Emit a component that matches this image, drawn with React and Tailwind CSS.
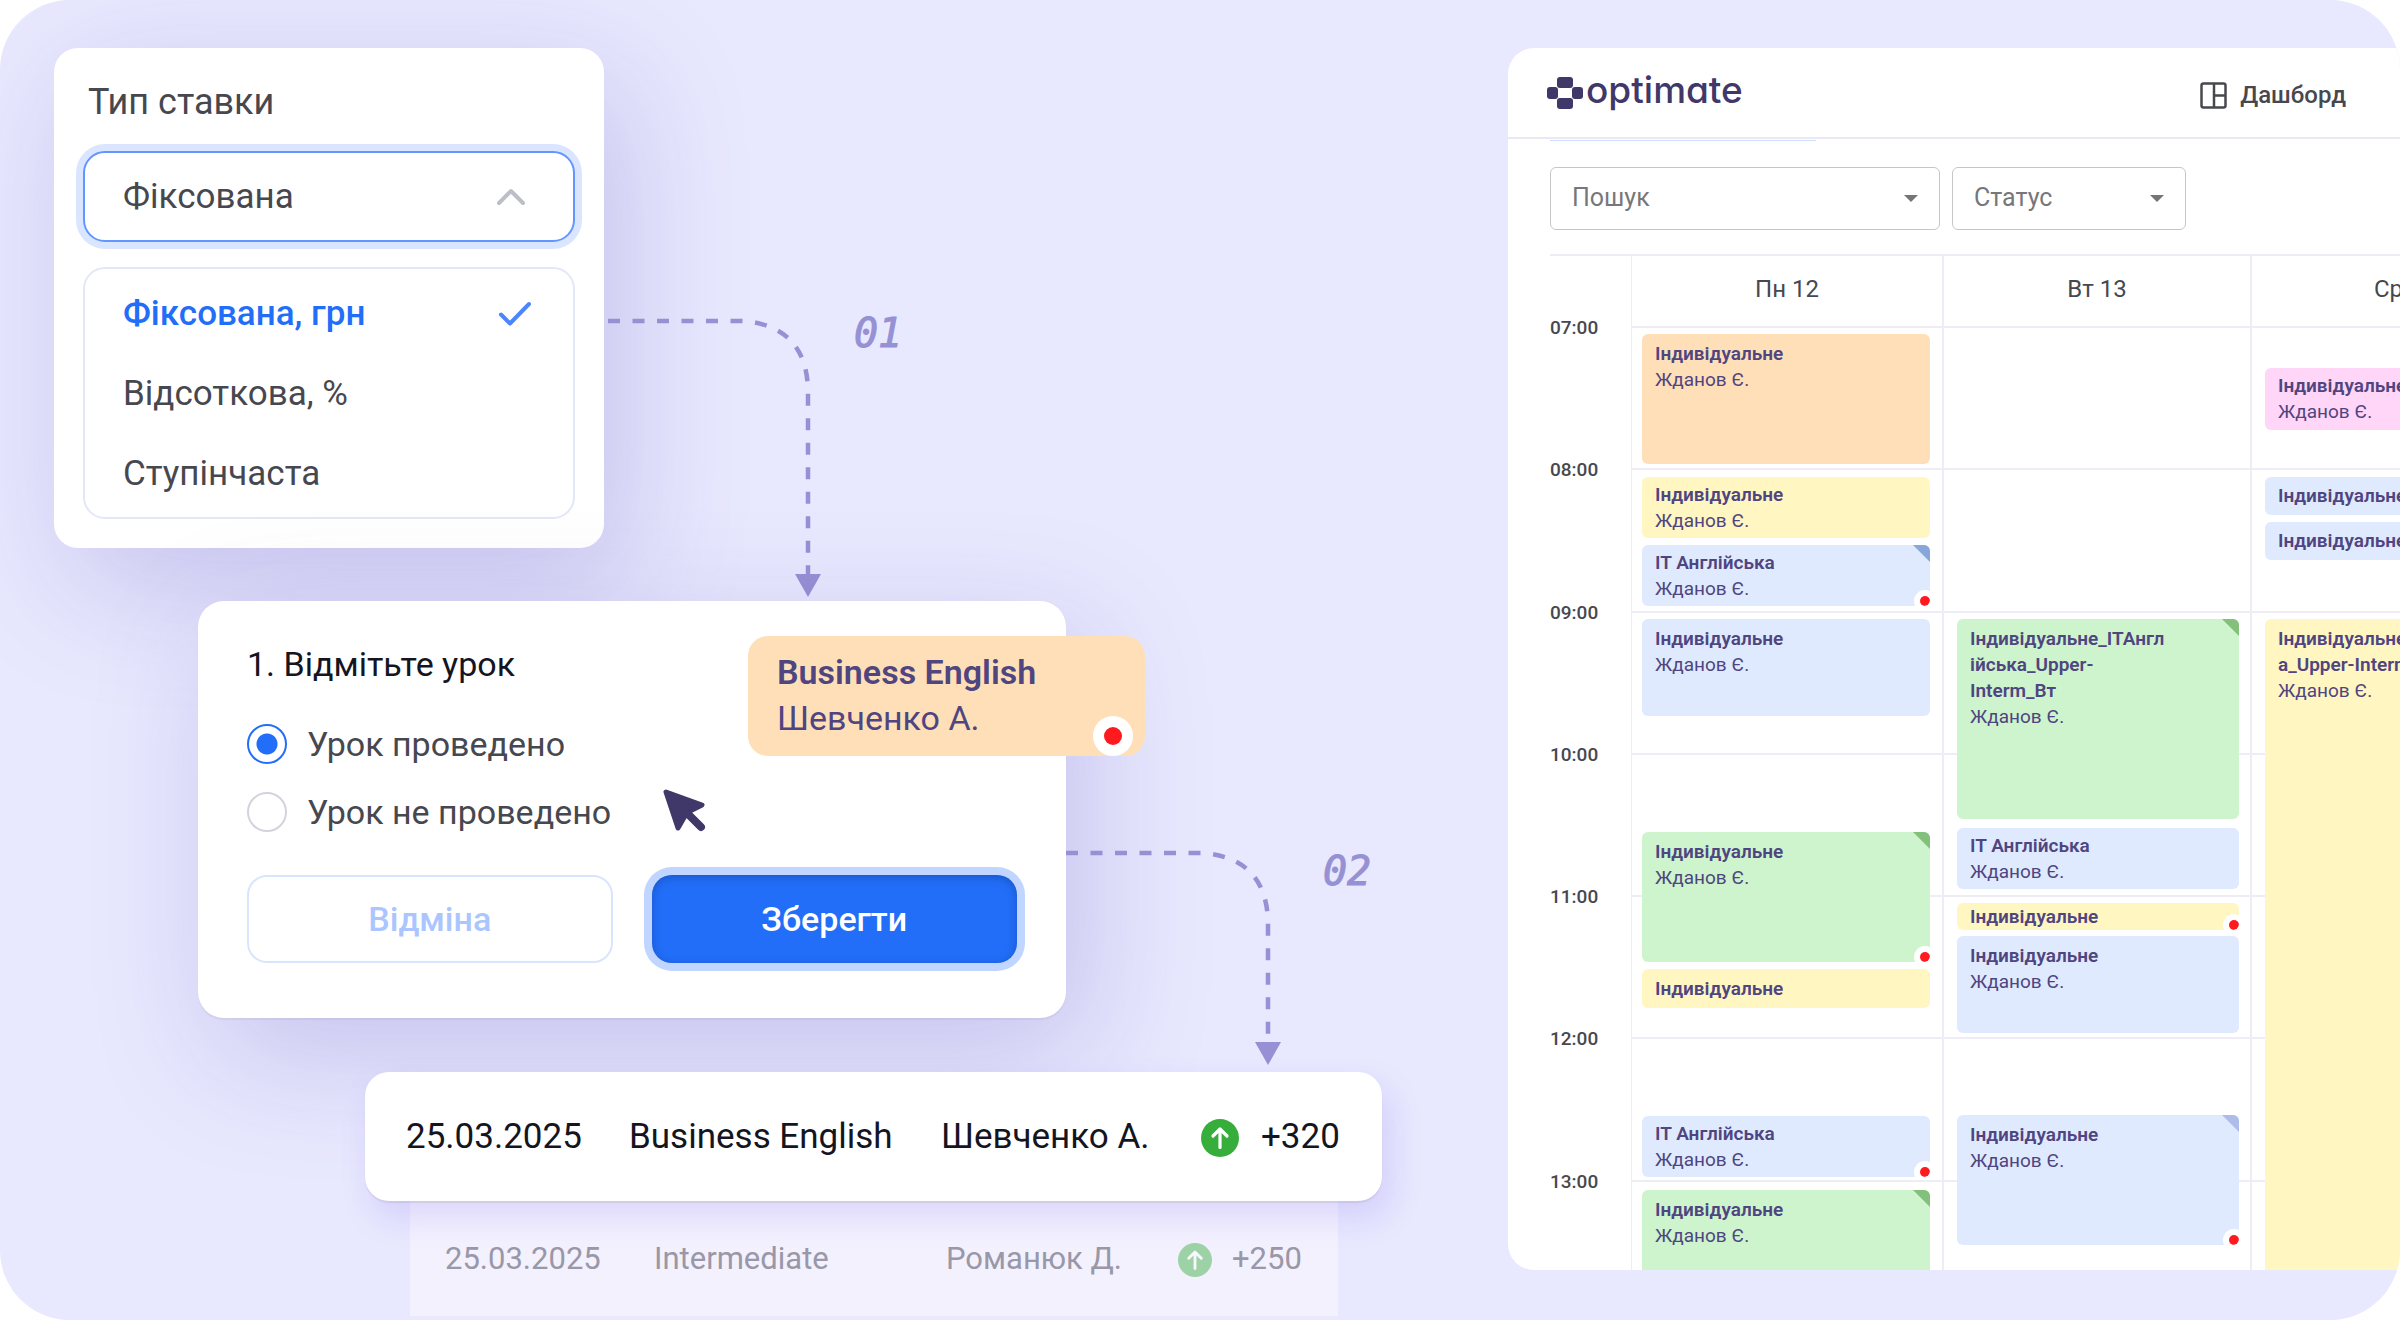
import React, { useState } from "react";

const TONES = {
  orange: "bg-[#ffdfb8]",
  yellow: "bg-[#fff6c2]",
  blue: "bg-[#dfeaff]",
  green: "bg-[#cdf4cc]",
  pink: "bg-[#ffd5f8]",
};

const CORNERS = {
  blue: "border-t-[#86a6dc]",
  green: "border-t-[#82c07c]",
  lilac: "border-t-[#adbce8]",
};

const MONDAY = [
  { title: "Індивідуальне", tone: "orange", box: "mt-2 h-[130px] pt-[7px]", teacher: true },
  { title: "Індивідуальне", tone: "yellow", box: "mt-[13px] h-[61px] pt-[5px]", teacher: true },
  { title: "ІТ Англійська", tone: "blue", box: "mt-[7px] h-[61px] pt-[5px]", teacher: true, corner: "blue", dot: true },
  { title: "Індивідуальне", tone: "blue", box: "mt-[13px] h-[97px] pt-[7px]", teacher: true },
  { title: "Індивідуальне", tone: "green", box: "mt-[116px] h-[130px] pt-[7px]", teacher: true, corner: "green", dot: true },
  { title: "Індивідуальне", tone: "yellow", box: "mt-[7px] h-[39px] pt-[7px]" },
  { title: "ІТ Англійська", tone: "blue", box: "mt-[108px] h-[61px] pt-[5px]", teacher: true, dot: true },
  { title: "Індивідуальне", tone: "green", box: "mt-[13px] h-[130px] pt-[7px]", teacher: true, corner: "green" },
];

const TUESDAY = [
  { title: "Індивідуальне_ІТАнгл ійська_Upper-Interm_Вт", tone: "green", box: "mt-[293px] h-[200px] pt-[7px] pr-[60px]", teacher: true, corner: "green" },
  { title: "ІТ Англійська", tone: "blue", box: "mt-[9px] h-[61px] pt-[5px]", teacher: true },
  { title: "Індивідуальне", tone: "yellow", box: "mt-[14px] h-[27px] pt-px", dot: true },
  { title: "Індивідуальне", tone: "blue", box: "mt-[6px] h-[97px] pt-[7px]", teacher: true },
  { title: "Індивідуальне", tone: "blue", box: "mt-[82px] h-[130px] pt-[7px]", teacher: true, corner: "lilac", dot: true },
];

const WEDNESDAY = [
  { title: "Індивідуальне", tone: "pink", box: "mt-[42px] h-[62px] pt-[5px]", teacher: true },
  { title: "Індивідуальне", tone: "blue", box: "mt-[47px] h-[38px] pt-[6px]" },
  { title: "Індивідуальне", tone: "blue", box: "mt-[7px] h-[38px] pt-[6px]" },
  { title: "Індивідуальне_ІТАнглійськ a_Upper-Interm_Ср", tone: "yellow", box: "mt-[59px] h-[660px] pt-[7px]", teacher: true },
];

const DAYS = [
  { name: "Пн 12", events: MONDAY, col: "w-[311px] border-l", inset: "pl-[10px] pr-[12px]" },
  { name: "Вт 13", events: TUESDAY, col: "w-[308px] border-l-2", inset: "pl-[13px] pr-[11px]" },
  { name: "Ср 14", events: WEDNESDAY, col: "w-[308px] border-l-2", inset: "pl-[13px] pr-[11px]" },
];

const HOURS = [
  { label: "07:00", h: "h-[142px]" },
  { label: "08:00", h: "h-[143px]" },
  { label: "09:00", h: "h-[142px]" },
  { label: "10:00", h: "h-[142px]" },
  { label: "11:00", h: "h-[142px]" },
  { label: "12:00", h: "h-[143px]" },
  { label: "13:00", h: "h-[90px]" },
];

function Lesson({ title, tone, box, teacher, corner, dot }) {
  return (
    <article className={`relative shrink-0 overflow-hidden rounded-md pl-[13px] text-[19px] leading-[26px] text-[#4f4580] ${TONES[tone]} ${box}`}>
      <h4 className="font-semibold">{title}</h4>
      {teacher && <p>Жданов Є.</p>}
      {corner && <span className={`absolute top-0 right-0 border-t-[17px] border-l-[17px] border-l-transparent ${CORNERS[corner]}`} />}
      {dot && (
        <span className="absolute -right-[6px] -bottom-[6px] flex size-[22px] items-center justify-center rounded-full bg-white">
          <span className="size-[10px] rounded-full bg-[#ff1a1f]" />
        </span>
      )}
    </article>
  );
}

function ArrowBadge({ className }) {
  return (
    <svg viewBox="0 0 38 38" className={className} aria-hidden="true">
      <circle cx="19" cy="19" r="19" fill="#37ad3c" />
      <path d="M19 28.500V10.500M12 17l7-7 7 7" fill="none" stroke="#fff" strokeWidth="3.200" strokeLinecap="round" strokeLinejoin="round" />
    </svg>
  );
}

function Connector({ className, d, tip }) {
  return (
    <svg className={className} width="220" height="290" viewBox="0 0 220 290" fill="none" aria-hidden="true">
      <path d={d} stroke="#9690d4" strokeWidth="4.500" strokeDasharray="12 12.500" />
      <path d={tip} fill="#9690d4" />
    </svg>
  );
}

function StepNumber({ className, children }) {
  return (
    <span className={`absolute font-['DejaVu_Sans_Mono',monospace] text-[40px] text-[#9690d4] italic [-webkit-text-stroke:1px_#9690d4] ${className}`}>
      {children}
    </span>
  );
}

function RateCard() {
  const [open, setOpen] = useState(true);
  const [rate, setRate] = useState(0);
  const options = ["Фіксована, грн", "Відсоткова, %", "Ступінчаста"];
  return (
    <section className="relative mt-12 ml-[54px] w-[550px] rounded-[24px] bg-white px-[29px] pt-[31px] pb-[29px] text-[35px] leading-[46px] text-[#47484f] shadow-[20px_36px_120px_rgba(100,90,190,0.26)]">
      <h2 id="rate-label" className="pl-[5px] text-[36px]">Тип ставки</h2>
      <button
        type="button"
        aria-labelledby="rate-label"
        aria-expanded={open}
        onClick={() => setOpen(!open)}
        className="mt-[26px] flex h-[91px] w-full items-center justify-between rounded-[22px] border-2 border-[#6297ff] bg-white pr-[46px] pl-[38px] ring-7 ring-[#dae6ff]"
      >
        <span>Фіксована</span>
        <svg width="32" height="20" viewBox="0 0 32 20" fill="none" aria-hidden="true">
          <path d="M4 16 16 4l12 12" stroke="#bcbfc7" strokeWidth="4" strokeLinecap="round" strokeLinejoin="round" />
        </svg>
      </button>
      <ul role="listbox" aria-labelledby="rate-label" className="mt-[25px] rounded-[22px] border-2 border-[#e3e7f8] pt-[5px] pb-[3px]">
        {options.map((o, i) => (
          <li key={o} role="option" aria-selected={rate === i}>
            <button
              type="button"
              onClick={() => setRate(i)}
              className={`flex h-20 w-full items-center justify-between pr-[40px] pl-[38px] ${rate === i ? "font-medium text-[#226ef8]" : ""}`}
            >
              {o}
              {rate === i && (
                <svg width="36" height="28" viewBox="0 0 36 28" fill="none" aria-hidden="true">
                  <path d="m4 14.500 9 9L32 4" stroke="#4c86ff" strokeWidth="4" strokeLinecap="round" strokeLinejoin="round" />
                </svg>
              )}
            </button>
          </li>
        ))}
      </ul>
      <Connector className="absolute top-[259px] left-[554px]" d="M0 14h136q64 6 64 72v190" tip="M187 267h26l-13 23z" />
      <StepNumber className="top-[262px] left-[800px]">01</StepNumber>
    </section>
  );
}

function RadioRow({ id, label, checked, onChange }) {
  return (
    <label htmlFor={id} className="flex h-10 items-center gap-5">
      <input
        id={id}
        type="radio"
        name="lesson"
        checked={checked}
        onChange={onChange}
        className="size-10 appearance-none rounded-full border-2 border-[#d5d2de] bg-white checked:border-[#226ef8] checked:bg-[radial-gradient(circle,#226ef8_0_10px,transparent_11px)]"
      />
      {label}
    </label>
  );
}

function LessonCard() {
  const [held, setHeld] = useState(true);
  return (
    <section className="relative mt-[53px] ml-[198px] w-[868px] rounded-[26px] bg-white px-[49px] pt-[40px] pb-[55px] text-[34px] leading-[46px] text-[#47484f] shadow-[0_2px_1px_rgba(160,140,170,0.15),20px_36px_120px_rgba(100,90,190,0.26)]">
      <h2 className="text-[#14151f]">1. Відмітьте урок</h2>
      <fieldset className="mt-[37px] flex flex-col gap-7">
        <RadioRow id="held" label="Урок проведено" checked={held} onChange={() => setHeld(true)} />
        <RadioRow id="not-held" label="Урок не проведено" checked={!held} onChange={() => setHeld(false)} />
      </fieldset>
      <div className="mt-[43px] grid grid-cols-2 gap-[39px] text-[34px] font-medium">
        <button type="button" className="h-[88px] rounded-[20px] border-2 border-[#d9e5ff] text-[#abc6ff]">Відміна</button>
        <button type="button" className="h-[88px] rounded-[20px] bg-[#226ef8] text-white shadow-[inset_0_2px_8px_rgba(15,60,150,0.5)] ring-8 ring-[#c0d5ff]">Зберегти</button>
      </div>
      <svg className="absolute top-[186px] left-[463px]" width="46" height="46" viewBox="0 0 46 46" aria-hidden="true">
        <path d="M5 5 41 18 26 25.500 17 41z" fill="#3f3868" stroke="#3f3868" strokeWidth="5" strokeLinejoin="round" />
        <path d="m25 25 15 15" stroke="#3f3868" strokeWidth="8" strokeLinecap="round" />
      </svg>
      <article className="absolute top-[35px] left-[550px] h-[120px] w-[397px] rounded-[20px] bg-[#ffdfb8] pt-[13px] pl-[29px] text-[#4f4580]">
        <h3 className="font-semibold">Business English</h3>
        <p>Шевченко А.</p>
        <span className="absolute right-3 bottom-0 flex size-10 items-center justify-center rounded-full bg-white">
          <span className="size-[18px] rounded-full bg-[#ff1a1f]" />
        </span>
      </article>
      <Connector className="absolute top-[238px] left-[868px]" d="M0 14h138q64 6 64 72v126" tip="M189 203h26l-13 23z" />
      <StepNumber className="top-[247px] left-[1125px]">02</StepNumber>
    </section>
  );
}

function Payouts() {
  return (
    <section className="mt-[54px] ml-[365px] w-[1017px]">
      <div className="relative flex h-[129px] items-center rounded-[24px] bg-white px-[41px] pt-0.5 text-[35px] text-[#14151f] shadow-[0_2px_1px_rgba(160,140,170,0.2),8px_16px_32px_rgba(130,110,240,0.2)]">
        <span className="w-[223px]">25.03.2025</span>
        <span className="w-[312px]">Business English</span>
        <span className="w-[260px]">Шевченко А.</span>
        <ArrowBadge className="mr-[22px] size-[38px]" />
        <span>+320</span>
      </div>
      <div className="mr-[44px] ml-[45px] border-b-2 border-[#ebe9fb] bg-[#f3f1fe]">
        <div className="flex h-[115px] items-center px-[35px] pt-0.5 text-[31px] text-[#9997a8]">
          <span className="w-[209px]">25.03.2025</span>
          <span className="w-[292px]">Intermediate</span>
          <span className="w-[232px]">Романюк Д.</span>
          <ArrowBadge className="mr-[20px] size-[34px] opacity-45" />
          <span>+250</span>
        </div>
      </div>
    </section>
  );
}

function Filter({ label, className }) {
  return (
    <div className={`relative ${className}`}>
      <select aria-label={label} className="h-[63px] w-full appearance-none rounded-md border border-[#c6c6c6] bg-transparent px-[21px] pb-0.5 text-[25px] text-[#77777b]">
        <option>{label}</option>
      </select>
      <span className="pointer-events-none absolute top-[28px] right-[22px] border-x-[7px] border-t-[7px] border-x-transparent border-t-[#757575]" />
    </div>
  );
}

function Schedule() {
  return (
    <section className="mt-12 h-[1222px] overflow-hidden rounded-l-[26px] bg-white text-[#47484f]">
      <header className="flex h-[91px] items-center justify-between border-b-2 border-[#e9e8f3] pr-[54px] pl-[39px]">
        <a href="#home" className="flex items-center gap-[3px] text-[#3f3868]">
          <svg width="36" height="32" viewBox="0 0 36 32" fill="currentColor" aria-hidden="true">
            <rect x="10" y="0" width="16" height="11" rx="3" />
            <rect x="10" y="21" width="16" height="11" rx="3" />
            <rect x="0" y="10" width="11" height="12" rx="3" />
            <rect x="25" y="10" width="11" height="12" rx="3" />
          </svg>
          <span className="pb-1.5 font-['Inter',sans-serif] text-[37px] leading-[40px] font-medium [font-feature-settings:'cv11']">optimate</span>
        </a>
        <a href="#dashboard" className="flex items-center gap-[13px] pt-[5px] text-[24px] font-medium">
          <svg width="27" height="27" viewBox="0 0 27 27" fill="none" stroke="#47484f" strokeWidth="2.500" aria-hidden="true">
            <rect x="1.500" y="1.500" width="24" height="24" rx="2" />
            <path d="M14 2v23M14 13.500h11" />
          </svg>
          Дашборд
        </a>
      </header>
      <div className="mt-px ml-[42px] w-[266px] border-t border-[#cfdeff] pt-[26px]" />
      <div className="flex gap-3 pl-[42px]">
        <Filter label="Пошук" className="w-[390px]" />
        <Filter label="Статус" className="w-[234px]" />
      </div>
      <div className="mt-[24px] ml-[42px] flex border-t-2 border-[#eeedf6]">
        <div className="w-[81px] shrink-0 pt-[59px] text-[19px] leading-[26px] font-medium">
          {HOURS.map((h) => (
            <div key={h.label} className={h.h}>{h.label}</div>
          ))}
        </div>
        {DAYS.map((d) => (
          <div key={d.name} className={`shrink-0 border-[#eeedf6] ${d.col}`}>
            <h3 className="flex h-[70px] items-center justify-center pb-1 text-[24px]">{d.name}</h3>
            <div className="grid">
              <div className="col-start-1 row-start-1">
                {HOURS.map((h) => (
                  <div key={h.label} className={`border-t-2 border-[#eeedf6] ${h.h}`} />
                ))}
              </div>
              <div className={`col-start-1 row-start-1 flex flex-col ${d.inset}`}>
                {d.events.map((e, i) => (
                  <Lesson key={i} {...e} />
                ))}
              </div>
            </div>
          </div>
        ))}
      </div>
    </section>
  );
}

export default function App() {
  return (
    <div className="bg-white">
      <main className="grid min-h-screen grid-cols-[1508fr_892fr] overflow-hidden rounded-[70px] bg-[#e8e8fe] font-['Roboto',sans-serif]">
        <div className="min-w-0">
          <RateCard />
          <LessonCard />
          <Payouts />
        </div>
        <div className="min-w-0">
          <Schedule />
        </div>
      </main>
    </div>
  );
}
